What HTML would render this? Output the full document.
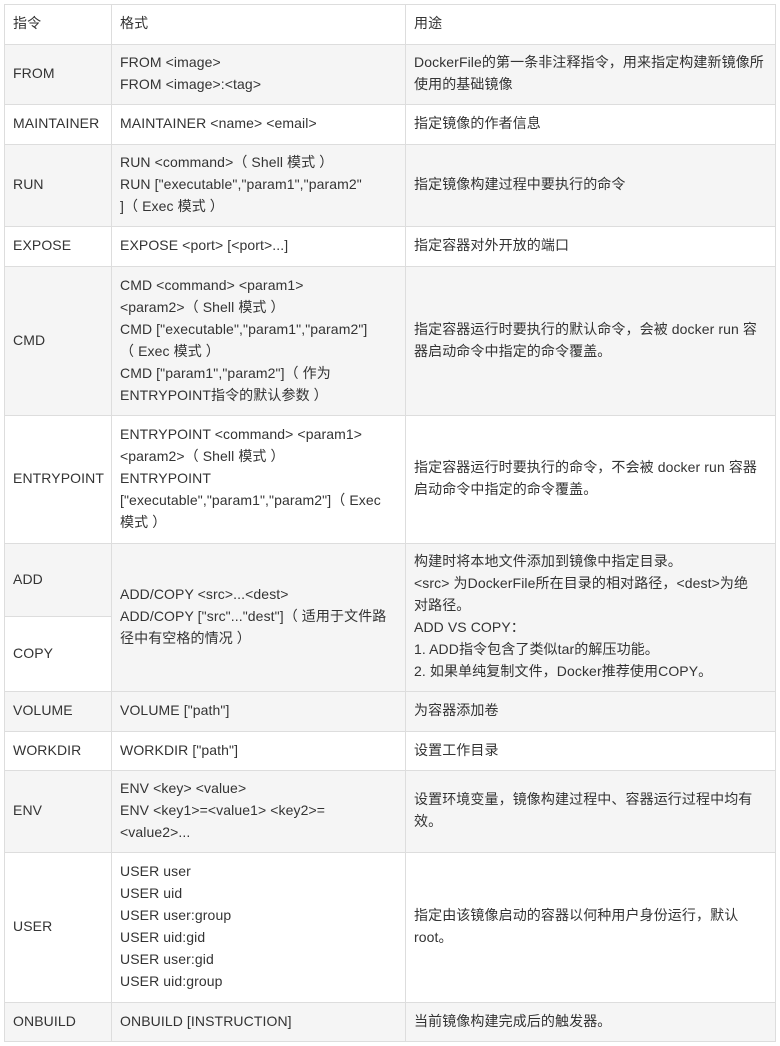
<!DOCTYPE html><html><head><meta charset="utf-8"><style>
body{margin:0;background:#fff;width:780px;height:1046px;position:relative;font-family:"Liberation Sans","Noto Sans CJK SC",sans-serif;font-size:14px;color:#333;}
.c{position:absolute;box-sizing:border-box;border:1px solid #ddd;display:flex;align-items:center;padding:0 8px 3px 8px;line-height:22px;white-space:nowrap;letter-spacing:0.1px;}
.g{background:#f5f5f5}
</style></head><body>
<div class="c" style="left:4px;top:4px;width:108px;height:41px">指令</div>
<div class="c" style="left:111px;top:4px;width:295px;height:41px">格式</div>
<div class="c" style="left:405px;top:4px;width:371px;height:41px">用途</div>

<div class="c g" style="left:4px;top:44px;width:108px;height:61px">FROM</div>
<div class="c g" style="left:111px;top:44px;width:295px;height:61px">FROM &lt;image&gt;<br>FROM &lt;image&gt;:&lt;tag&gt;</div>
<div class="c g" style="left:405px;top:44px;width:371px;height:61px">DockerFile的第一条非注释指令，用来指定构建新镜像所<br>使用的基础镜像</div>

<div class="c" style="left:4px;top:104px;width:108px;height:41px">MAINTAINER</div>
<div class="c" style="left:111px;top:104px;width:295px;height:41px">MAINTAINER &lt;name&gt; &lt;email&gt;</div>
<div class="c" style="left:405px;top:104px;width:371px;height:41px">指定镜像的作者信息</div>

<div class="c g" style="left:4px;top:144px;width:108px;height:83px">RUN</div>
<div class="c g" style="left:111px;top:144px;width:295px;height:83px">RUN &lt;command&gt;（ Shell 模式 ）<br>RUN ["executable","param1","param2"<br>]（ Exec 模式 ）</div>
<div class="c g" style="left:405px;top:144px;width:371px;height:83px">指定镜像构建过程中要执行的命令</div>

<div class="c" style="left:4px;top:226px;width:108px;height:41px">EXPOSE</div>
<div class="c" style="left:111px;top:226px;width:295px;height:41px">EXPOSE &lt;port&gt; [&lt;port&gt;...]</div>
<div class="c" style="left:405px;top:226px;width:371px;height:41px">指定容器对外开放的端口</div>

<div class="c g" style="left:4px;top:266px;width:108px;height:150px">CMD</div>
<div class="c g" style="left:111px;top:266px;width:295px;height:150px">CMD &lt;command&gt; &lt;param1&gt;<br>&lt;param2&gt;（ Shell 模式 ）<br>CMD ["executable","param1","param2"]<br>（ Exec 模式 ）<br>CMD ["param1","param2"]（ 作为<br>ENTRYPOINT指令的默认参数 ）</div>
<div class="c g" style="left:405px;top:266px;width:371px;height:150px">指定容器运行时要执行的默认命令，会被 docker run 容<br>器启动命令中指定的命令覆盖。</div>

<div class="c" style="left:4px;top:415px;width:108px;height:129px">ENTRYPOINT</div>
<div class="c" style="left:111px;top:415px;width:295px;height:129px">ENTRYPOINT &lt;command&gt; &lt;param1&gt;<br>&lt;param2&gt;（ Shell 模式 ）<br>ENTRYPOINT<br>["executable","param1","param2"]（ Exec<br>模式 ）</div>
<div class="c" style="left:405px;top:415px;width:371px;height:129px">指定容器运行时要执行的命令，不会被 docker run 容器<br>启动命令中指定的命令覆盖。</div>

<div class="c g" style="left:4px;top:543px;width:108px;height:74px">ADD</div>
<div class="c" style="left:4px;top:616px;width:108px;height:76px">COPY</div>
<div class="c g" style="left:111px;top:543px;width:295px;height:149px">ADD/COPY &lt;src&gt;...&lt;dest&gt;<br>ADD/COPY ["src"..."dest"]（ 适用于文件路<br>径中有空格的情况 ）</div>
<div class="c g" style="left:405px;top:543px;width:371px;height:149px">构建时将本地文件添加到镜像中指定目录。<br>&lt;src&gt; 为DockerFile所在目录的相对路径，&lt;dest&gt;为绝<br>对路径。<br>ADD VS COPY：<br>1. ADD指令包含了类似tar的解压功能。<br>2. 如果单纯复制文件，Docker推荐使用COPY。</div>

<div class="c g" style="left:4px;top:691px;width:108px;height:41px">VOLUME</div>
<div class="c g" style="left:111px;top:691px;width:295px;height:41px">VOLUME ["path"]</div>
<div class="c g" style="left:405px;top:691px;width:371px;height:41px">为容器添加卷</div>

<div class="c" style="left:4px;top:731px;width:108px;height:40px">WORKDIR</div>
<div class="c" style="left:111px;top:731px;width:295px;height:40px">WORKDIR ["path"]</div>
<div class="c" style="left:405px;top:731px;width:371px;height:40px">设置工作目录</div>

<div class="c g" style="left:4px;top:770px;width:108px;height:83px">ENV</div>
<div class="c g" style="left:111px;top:770px;width:295px;height:83px">ENV &lt;key&gt; &lt;value&gt;<br>ENV &lt;key1&gt;=&lt;value1&gt; &lt;key2&gt;=<br>&lt;value2&gt;...</div>
<div class="c g" style="left:405px;top:770px;width:371px;height:83px">设置环境变量，镜像构建过程中、容器运行过程中均有<br>效。</div>

<div class="c" style="left:4px;top:852px;width:108px;height:151px">USER</div>
<div class="c" style="left:111px;top:852px;width:295px;height:151px">USER user<br>USER uid<br>USER user:group<br>USER uid:gid<br>USER user:gid<br>USER uid:group</div>
<div class="c" style="left:405px;top:852px;width:371px;height:151px">指定由该镜像启动的容器以何种用户身份运行，默认<br>root。</div>

<div class="c g" style="left:4px;top:1002px;width:108px;height:40px">ONBUILD</div>
<div class="c g" style="left:111px;top:1002px;width:295px;height:40px">ONBUILD [INSTRUCTION]</div>
<div class="c g" style="left:405px;top:1002px;width:371px;height:40px">当前镜像构建完成后的触发器。</div>
</body></html>
